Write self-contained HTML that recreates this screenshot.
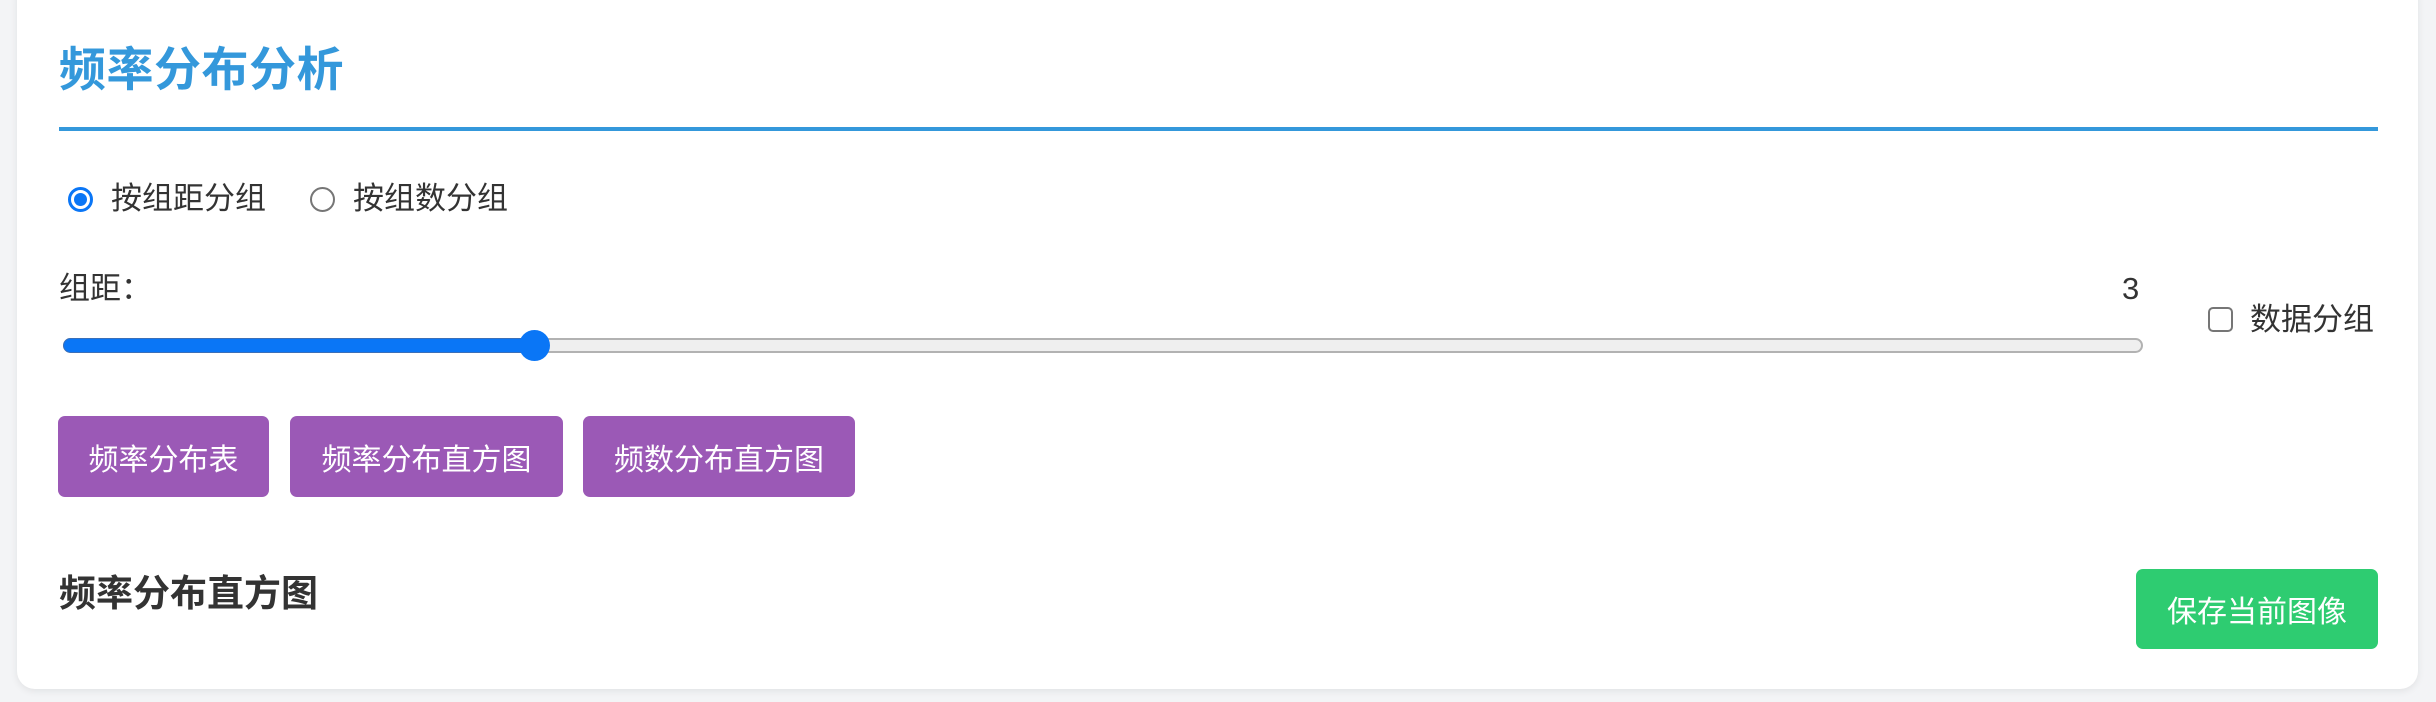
<!DOCTYPE html>
<html><head><meta charset="utf-8"><style>
*{margin:0;padding:0;box-sizing:border-box}
body{width:2436px;height:702px;background:#f3f4f6;font-family:"Liberation Sans","Noto Sans CJK SC",sans-serif;position:relative;overflow:hidden;color:#333}
.card{position:absolute;left:17px;top:-20px;width:2401px;height:709px;background:#fff;border-radius:18px;box-shadow:0 2px 8px rgba(0,0,0,0.08)}
.abs{position:absolute;white-space:nowrap}
h1{position:absolute;left:59px;top:40px;font-size:47px;line-height:60px;color:#3498db;font-weight:bold;letter-spacing:0.5px}
.line{position:absolute;left:59px;top:127px;width:2319px;height:4px;background:#3498db}
.radio{position:absolute;width:25px;height:25px;border-radius:50%;border:2px solid #767676;background:#fff}
.radio.on{border:3px solid #0a76f6}
.radio.on::after{content:"";position:absolute;left:3px;top:3px;width:13px;height:13px;border-radius:50%;background:#0a76f6}
.t30{font-size:31px;line-height:40px}
.btn{position:absolute;top:416px;height:81px;background:#9b59b6;border-radius:7px;color:#fff;font-size:30px;display:flex;align-items:center;justify-content:center}
</style></head><body>
<div class="card"></div>
<h1>频率分布分析</h1>
<div class="line"></div>
<div class="radio on" style="left:68px;top:187px"></div>
<div class="abs t30" style="left:111px;top:179px">按组距分组</div>
<div class="radio" style="left:310px;top:187px"></div>
<div class="abs t30" style="left:353px;top:179px">按组数分组</div>
<div class="abs t30" style="left:59px;top:269px">组距：</div>
<div class="abs t30" style="left:2122px;top:269px">3</div>
<div class="abs" style="left:63px;top:338px;width:2080px;height:15px;border-radius:8px;background:#efefef;border:2px solid #b2b2b2"></div>
<div class="abs" style="left:63px;top:338px;width:475px;height:15px;border-radius:8px;background:#0a76f6;border:1px solid #3b6fb8"></div>
<div class="abs" style="left:519px;top:330px;width:31px;height:31px;border-radius:50%;background:#0a76f6"></div>
<div class="abs" style="left:2208px;top:307px;width:25px;height:25px;border-radius:5px;border:2px solid #767676;background:#fff"></div>
<div class="abs t30" style="left:2250px;top:300px">数据分组</div>
<div class="btn" style="left:58px;width:211px">频率分布表</div>
<div class="btn" style="left:290px;width:273px">频率分布直方图</div>
<div class="btn" style="left:583px;width:272px">频数分布直方图</div>
<div class="abs" style="left:59px;top:571px;font-size:37px;line-height:46px;font-weight:bold;color:#333">频率分布直方图</div>
<div class="btn" style="left:2136px;top:569px;width:242px;height:80px;background:#2ecc71">保存当前图像</div>
</body></html>
